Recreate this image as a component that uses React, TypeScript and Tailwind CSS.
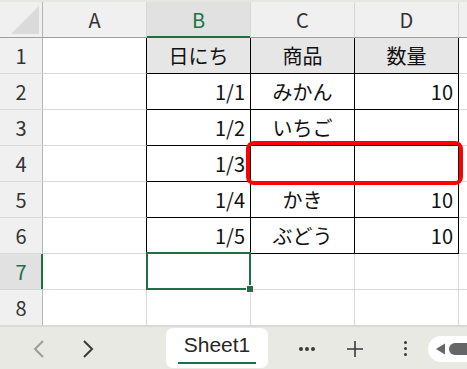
import React from 'react';

const FONT = { fontFamily: '"Noto Sans CJK JP", "Noto Sans", sans-serif' };

const cols = ['A', 'B', 'C', 'D'];

// 表の中身 (B〜D 列)
const data: string[][] = [
  ['日にち', '商品', '数量'],
  ['1/1', 'みかん', '10'],
  ['1/2', 'いちご', ''],
  ['1/3', '', ''],
  ['1/4', 'かき', '10'],
  ['1/5', 'ぶどう', '10'],
  ['', '', ''],
  ['', '', ''],
];

function Cell({ row, col }: { row: number; col: number }) {
  const inTable = row < 6;
  // col 0 = A, 1..3 = B..D
  const rightBlack = inTable;
  const bottomBlack = inTable && col > 0;
  const isHead = row === 0 && col > 0;
  const text = col > 0 ? data[row][col - 1] : '';
  const align = col === 2 || row === 0 ? 'justify-center' : 'justify-end pr-[5px]';
  return (
    <div
      className={`relative flex h-full w-[104px] shrink-0 items-center border-r border-b text-[20px] text-[#111] ${align} ${
        rightBlack ? 'border-r-black' : 'border-r-[#d9d9d9]'
      } ${bottomBlack ? 'border-b-black' : 'border-b-[#d9d9d9]'} ${isHead ? 'bg-[#e7e6e6]' : 'bg-white'}`}
    >
      {text}
      {row === 6 && col === 1 && (
        <>
          <div className="absolute -left-[1px] -top-[2px] z-10 h-[38px] w-[105px] border-2 border-[#1e7145]" />
          <div className="absolute left-[99px] top-[31px] z-10 box-content h-[6px] w-[6px] border border-white bg-[#1e7145]" />
        </>
      )}
    </div>
  );
}

export default function App() {
  return (
    <div className="relative h-[369px] w-[467px] overflow-hidden bg-white" style={FONT}>
      {/* 列見出し */}
      <div className="h-[2px] bg-[#e6e6e3]" />
      <div className="flex h-[36px] border-b border-[#9f9f9f] bg-[#f0f0f0]">
        <div className="relative h-full w-[43px] shrink-0 border-r border-[#b5b5b5]">
          <div
            className="absolute bottom-[3px] right-[3px] h-[28px] w-[28px] bg-[#dadada]"
            style={{ clipPath: 'polygon(100% 0, 100% 100%, 0 100%)' }}
          />
        </div>
        {cols.map((c) => (
          <div
            key={c}
            className={`relative flex h-full w-[104px] shrink-0 items-center justify-center border-r border-[#d6d6d6] text-[20px] ${
              c === 'B' ? 'bg-[#e1e1e1] text-[#1e7145]' : 'text-[#333]'
            }`}
          >
            {c}
            {c === 'B' && <div className="absolute -bottom-[1px] left-0 h-[2px] w-full bg-[#1e7145]" />}
          </div>
        ))}
        <div className="h-full flex-1" />
      </div>

      {/* 行 */}
      {data.map((_, r) => (
        <div key={r} className="flex h-[36px]">
          <div
            className={`relative flex h-full w-[43px] shrink-0 items-center justify-center border-b border-r text-[20px] ${
              r === 6
                ? 'border-b-[#d6d6d6] border-r-[#b5b5b5] bg-[#e1e1e1] text-[#1e7145]'
                : 'border-b-[#dadada] border-r-[#b5b5b5] bg-[#f0f0f0] text-[#333]'
            }`}
          >
            {r + 1}
            {r === 6 && <div className="absolute -right-[1px] top-0 h-full w-[2px] bg-[#1e7145]" />}
          </div>
          {[0, 1, 2, 3].map((c) => (
            <Cell key={c} row={r} col={c} />
          ))}
          <div className="h-full flex-1 border-b border-[#d9d9d9]" />
        </div>
      ))}

      {/* 強調の赤枠 */}
      <div className="absolute left-[246px] top-[141px] z-20 h-[44px] w-[217px] rounded-[8px] border-[4.5px] border-[#ff0000]" />

      {/* シートタブ */}
      <div className="flex h-[44px] border-t border-[#d9d9d9] bg-[#e9e9e3]">
        <div className="flex w-[166px] shrink-0 items-center">
          <svg className="ml-[33px]" width="12" height="18" viewBox="0 0 12 18">
            <path d="M10 1 L2 9 L10 17" fill="none" stroke="#9b9b9b" strokeWidth="2" />
          </svg>
          <svg className="ml-[37px]" width="12" height="18" viewBox="0 0 12 18">
            <path d="M2 1 L10 9 L2 17" fill="none" stroke="#3a3a3a" strokeWidth="2" />
          </svg>
        </div>
        <div className="mt-[1px] flex h-[40px] w-[102px] shrink-0 flex-col items-center rounded-[7px] bg-white">
          <span
            className="mt-[4px] text-[21px] leading-[26px] text-[#262626]"
            style={{ fontFamily: '"Liberation Sans", Arial, sans-serif' }}
          >
            Sheet1
          </span>
          <div className="mt-[4px] h-[2px] w-[78px] bg-[#1e7145]" />
        </div>
        <div className="ml-[6px] mt-[6px] h-[29px] w-px bg-[#c8c8c8]" />
        <div className="flex flex-1 items-center">
          <div className="ml-[25px] flex gap-[2px]">
            <span className="h-[4px] w-[4px] rounded-full bg-[#3a3a3a]" />
            <span className="h-[4px] w-[4px] rounded-full bg-[#3a3a3a]" />
            <span className="h-[4px] w-[4px] rounded-full bg-[#3a3a3a]" />
          </div>
          <svg className="ml-[31px]" width="18" height="18" viewBox="0 0 18 18">
            <path d="M9 1 V17 M1 9 H17" stroke="#3a3a3a" strokeWidth="1.6" />
          </svg>
          <div className="ml-[40px] flex flex-col gap-[3px]">
            <span className="h-[3px] w-[3px] rounded-full bg-[#3a3a3a]" />
            <span className="h-[3px] w-[3px] rounded-full bg-[#3a3a3a]" />
            <span className="h-[3px] w-[3px] rounded-full bg-[#3a3a3a]" />
          </div>
          <div className="ml-[21px] flex h-[26px] w-[60px] shrink-0 items-center rounded-full bg-white pl-[8px]">
            <svg width="10" height="12" viewBox="0 0 10 12">
              <path d="M0 6 L9 0.5 V11.5 Z" fill="#666" />
            </svg>
            <div className="ml-[3px] h-[12px] w-[30px] rounded-full bg-[#666]" />
          </div>
        </div>
      </div>
    </div>
  );
}
